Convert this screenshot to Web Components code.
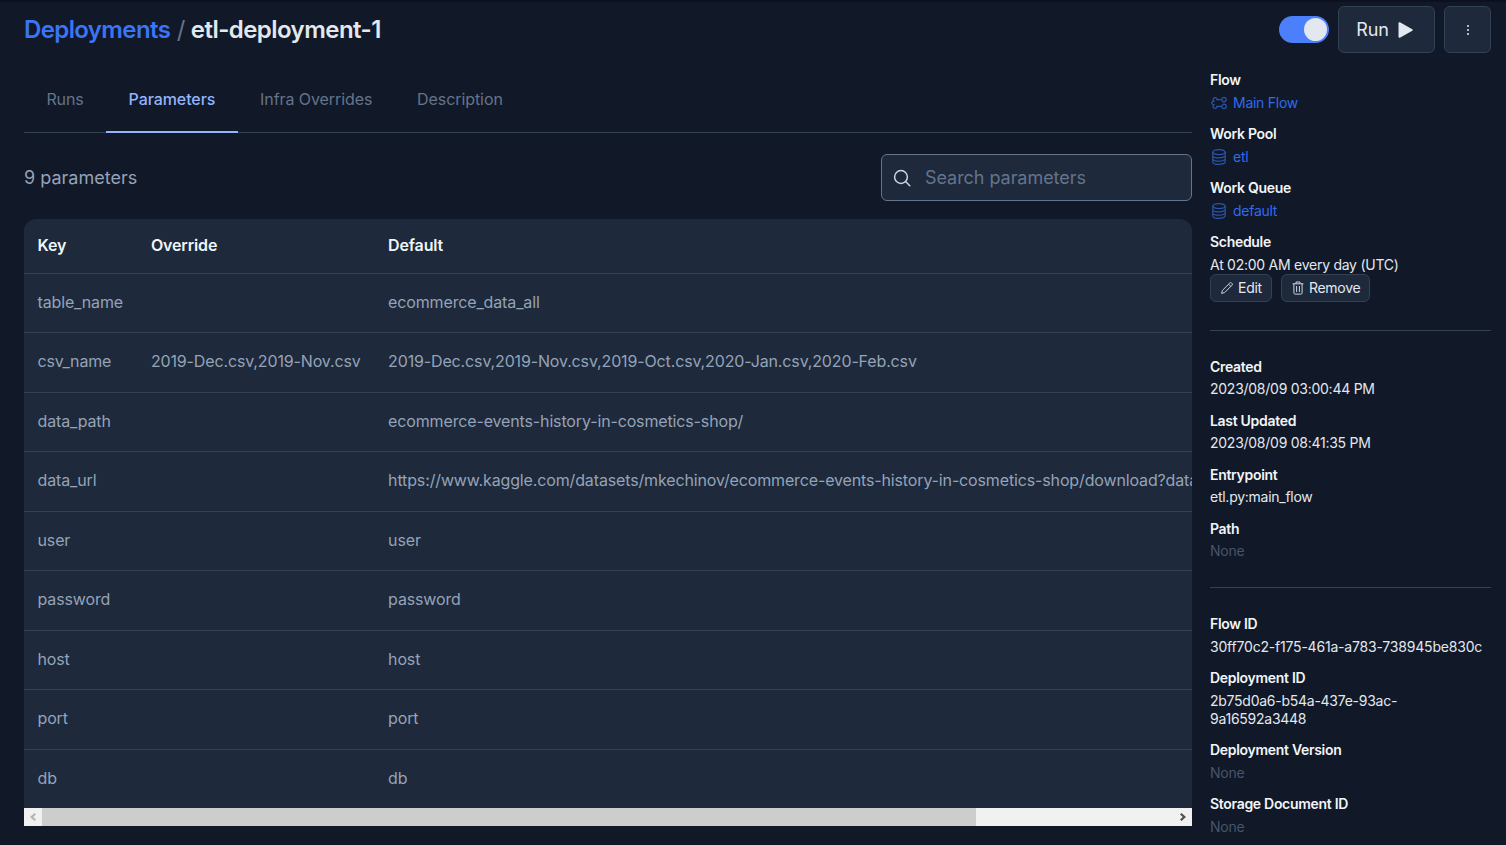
<!DOCTYPE html>
<html lang="en">
<head>
<meta charset="utf-8">
<title>etl-deployment-1</title>
<style>
html, body { margin: 0; height: 100%; overflow: hidden; background: #111827; }
body { font-family: Inter, "Noto Sans", sans-serif; color: #e2e8f0; }
</style>
</head>
<body>
<deployment-page></deployment-page>
<script>
const ICONS = {
    flow: '<svg width="16" height="12" viewBox="0 0 16 12" fill="none" stroke="currentColor" stroke-width="1.2"><circle cx="13" cy="2.6" r="2.2"/><circle cx="13" cy="9.4" r="2.2"/><path d="M10.8 2.6H5.2M10.8 9.4H5.2M6.2 2.6C6.2 1.4 5.2.6 4.2.6 2.9.6 2.1 1.6 2.1 2.7c0 .7.3 1.2.7 1.5C1.5 4.4.7 5.1.7 6s.8 1.6 2.1 1.8c-.4.3-.7.8-.7 1.5 0 1.1.8 2.1 2.1 2.1 1 0 2-.8 2-2"/></svg>',
    db: '<svg width="14" height="16" viewBox="0 0 14 16" fill="none" stroke="currentColor" stroke-width="1.2"><ellipse cx="7" cy="3.1" rx="6.2" ry="2.5"/><path d="M.8 3.1v9.8c0 1.4 2.8 2.5 6.2 2.5s6.2-1.1 6.2-2.5V3.1M.8 6.4c0 1.4 2.8 2.5 6.2 2.5s6.2-1.1 6.2-2.5M.8 9.7c0 1.4 2.8 2.5 6.2 2.5s6.2-1.1 6.2-2.5"/></svg>',
    pencil: '<svg width="12" height="12" viewBox="0 0 12 12" fill="none" stroke="currentColor" stroke-width="1" stroke-linejoin="round"><path d="M.6 11.4l.8-3L8.8 1a1.2 1.2 0 0 1 1.7 0l.5.5a1.2 1.2 0 0 1 0 1.7L3.6 10.6z"/><path d="M7.6 2.2l2.2 2.2"/></svg>',
    trash: '<svg width="12" height="14" viewBox="0 0 12 14" fill="none" stroke="currentColor" stroke-width="1"><path d="M.6 2.8h10.8M4 2.8V1h4v1.8M1.9 2.8v9c0 .8.5 1.3 1.2 1.3h5.8c.7 0 1.2-.5 1.2-1.3v-9M4.6 5v6M7.4 5v6"/></svg>',
    search: '<svg width="18" height="18" viewBox="0 0 18 18" fill="none" stroke="currentColor" stroke-width="1.5" stroke-linecap="round"><circle cx="8" cy="8" r="6.4"/><path d="M12.8 12.8l4 4"/></svg>',
    play: '<svg width="15" height="16" viewBox="0 0 15 16"><path fill="currentColor" d="M0.5 1.2c0-.8.8-1.2 1.4-.9l12.4 6.9c.7.4.7 1.3 0 1.6L1.9 15.7c-.6.3-1.4-.1-1.4-.9z"/></svg>',
    dots: '<svg width="4" height="12" viewBox="0 0 4 12"><g fill="currentColor"><circle cx="2" cy="2" r="1"/><circle cx="2" cy="6" r="1"/><circle cx="2" cy="10" r="1"/></g></svg>'
};

class PageHeader extends HTMLElement {
    constructor() {
        super();
        this.attachShadow({ mode: 'open' });
        this.shadowRoot.innerHTML = `
            <style>
                :host { display: flex; align-items: center; justify-content: space-between; height: 47px; padding: 4px 15px 0 24px; }
                .crumbs { font-size: 24px; line-height: 32px; font-weight: 600; letter-spacing: -0.55px; color: #e2e8f0; white-space: nowrap; }
                .crumbs a { color: #3b74f6; text-decoration: none; letter-spacing: -0.62px; }
                .crumbs span { color: #64748b; font-weight: 400; margin: 0 0.5px 0 1px; }
                .actions { display: flex; align-items: center; gap: 9px; }
                .toggle { width: 50px; height: 27px; border-radius: 14px; background: #4b7ffb; display: flex; align-items: center; justify-content: flex-end; padding-right: 2px; box-sizing: border-box; }
                .toggle i { width: 23px; height: 23px; border-radius: 50%; background: #e2e8f0; }
                .btn { height: 47px; box-sizing: border-box; border: 1px solid #334155; border-radius: 6px; background: #1e293b; color: #e2e8f0; display: flex; align-items: center; justify-content: center; }
                .run { width: 97px; gap: 9px; font-size: 18px; letter-spacing: -0.2px; padding-right: 4px; }
                .more { width: 47px; }
            </style>
            <div class="crumbs"><a href="#">Deployments</a> <span>/</span> etl-deployment-1</div>
            <div class="actions">
                <div class="toggle"><i></i></div>
                <div class="btn run">Run ${ICONS.play}</div>
                <div class="btn more">${ICONS.dots}</div>
            </div>
        `;
    }
}

class TabBar extends HTMLElement {
    constructor() {
        super();
        this.attachShadow({ mode: 'open' });
        this.shadowRoot.innerHTML = `
            <style>
                :host { display: flex; height: 66px; box-sizing: border-box; border-bottom: 1px solid #334155; margin-top: 14px; }
                .tab { padding: 0 22.4px; display: flex; align-items: center; font-size: 16px; letter-spacing: -0.08px; color: #64748b; margin-bottom: -1px; border-bottom: 2px solid transparent; box-sizing: border-box; font-weight: 400; }
                .tab.active { color: #93b4fb; font-weight: 500; border-bottom-color: #93b4fb; }
            </style>
            <div class="tab">Runs</div>
            <div class="tab active">Parameters</div>
            <div class="tab">Infra Overrides</div>
            <div class="tab">Description</div>
        `;
    }
}

class SearchBox extends HTMLElement {
    constructor() {
        super();
        this.attachShadow({ mode: 'open' });
        this.shadowRoot.innerHTML = `
            <style>
                :host { display: flex; align-items: center; width: 311px; height: 47px; box-sizing: border-box; border: 1px solid #64748b; border-radius: 6px; background: #1e293b; padding-left: 11px; gap: 14px; color: #cbd5e1; }
                span { font-size: 18px; color: #64748b; letter-spacing: -0.05px; }
                svg { flex: none; }
            </style>
            ${ICONS.search}
            <span>Search parameters</span>
        `;
    }
}

class ParamRow extends HTMLElement {
    constructor() {
        super();
        this.attachShadow({ mode: 'open' });
        this.shadowRoot.innerHTML = `
            <style>
                :host { display: grid; grid-template-columns: 113.4px 237.2px 1fr; align-items: center; height: 59.5px; box-sizing: border-box; padding: 0 0 2px 13.5px; border-top: 1px solid #334155; font-size: 16px; letter-spacing: -0.14px; color: #94a3b8; white-space: nowrap; overflow: hidden; }
                :host([head]) { height: 53.5px; border-top: 0; color: #f1f5f9; font-weight: 600; padding-bottom: 2px; }
            </style>
            <div><slot name="key"></slot></div>
            <div><slot name="override"></slot></div>
            <div><slot name="default"></slot></div>
        `;
    }
}

class ParamTable extends HTMLElement {
    constructor() {
        super();
        this.attachShadow({ mode: 'open' });
        this.shadowRoot.innerHTML = `
            <style>
                :host { display: block; background: #1e293b; border-radius: 12px 12px 0 0; overflow: hidden; }
                .bar { display: flex; height: 18px; background: #f1f1f1; }
                .end { width: 18px; display: flex; align-items: center; justify-content: center; color: #b4b4b4; }
                .thumb { width: 934px; background: #cdcdcd; }
                .rest { flex: 1; }
                .right { color: #505050; }
            </style>
            <slot></slot>
            <div class="bar">
                <div class="end"><svg width="6" height="8" viewBox="0 0 6 8"><path fill="currentColor" d="M4.5 0L6 1.4 3.2 4 6 6.6 4.5 8 0 4z"/></svg></div>
                <div class="thumb"></div>
                <div class="rest"></div>
                <div class="end right"><svg width="6" height="8" viewBox="0 0 6 8"><path fill="currentColor" d="M1.5 0L0 1.4 2.8 4 0 6.6 1.5 8 6 4z"/></svg></div>
            </div>
        `;
    }
}

class MetaItem extends HTMLElement {
    constructor() {
        super();
        this.attachShadow({ mode: 'open' });
        this.shadowRoot.innerHTML = `
            <style>
                :host { display: block; font-size: 14px; line-height: 18px; letter-spacing: -0.26px; color: #e2e8f0; }
                .label { font-weight: 600; line-height: 20px; color: #f1f5f9; margin-bottom: 3.5px; letter-spacing: -0.3px; }
                :host([none]) .value { color: #475569; }
                :host([link]) .value { color: #2f6bf0; display: flex; align-items: center; gap: 5px; }
                :host([link]) ::slotted(svg) { color: #2a55aa; flex: none; }
                :host([link]) ::slotted(svg.db) { margin-left: 2px; margin-right: 2px; }
                :host([link]) ::slotted(svg.flow) { margin-left: 1px; margin-right: 1px; }
            </style>
            <div class="label"><slot name="label"></slot></div>
            <div class="value"><slot></slot></div>
        `;
    }
}

class MetaButton extends HTMLElement {
    constructor() {
        super();
        this.attachShadow({ mode: 'open' });
        this.shadowRoot.innerHTML = `
            <style>
                :host { display: inline-flex; align-items: center; gap: 5px; height: 28px; box-sizing: border-box; padding: 0 9px 0 10px; border: 1px solid #334155; border-radius: 6px; background: #1e293b; font-size: 14px; letter-spacing: -0.26px; color: #e2e8f0; }
                :host ::slotted(svg) { color: #cbd5e1; }
            </style>
            <slot></slot>
        `;
    }
}

class MetaPanel extends HTMLElement {
    constructor() {
        super();
        this.attachShadow({ mode: 'open' });
        this.shadowRoot.innerHTML = `
            <style>
                :host { display: flex; flex-direction: column; gap: 12.5px; padding-top: 17.2px; }
                ::slotted(hr) { border: 0; border-top: 1px solid #334155; width: 100%; margin: 15.9px 0 13.1px; }
                ::slotted(hr.second) { margin: 14.5px 0 13.5px; }
            </style>
            <slot></slot>
        `;
    }
}

class DeploymentPage extends HTMLElement {
    constructor() {
        super();
        this.attachShadow({ mode: 'open' });
        const none = l => `<meta-item none><span slot="label">${l}</span>None</meta-item>`;
        const row = (k, o, d) => `<param-row><span slot="key">${k}</span><span slot="override">${o}</span><span slot="default">${d}</span></param-row>`;
        const icon = (name) => ICONS[name].replace('<svg', `<svg class="${name}"`);
        this.shadowRoot.innerHTML = `
            <style>
                :host { display: block; height: 845px; box-sizing: border-box; border-top: 2px solid #0b111e; background: #111827; overflow: hidden; }
                .body { display: grid; grid-template-columns: 1168px 281px; column-gap: 18px; padding-left: 24px; }
                .controls { display: flex; align-items: center; justify-content: space-between; padding: 21px 0 18px; }
                .count { font-size: 18px; color: #94a3b8; }
                .btns { display: flex; gap: 9px; }
                .hash { letter-spacing: -0.2px; }
            </style>
            <page-header></page-header>
            <div class="body">
                <main>
                    <tab-bar></tab-bar>
                    <div class="controls">
                        <div class="count">9 parameters</div>
                        <search-box></search-box>
                    </div>
                    <param-table>
                        <param-row head><span slot="key">Key</span><span slot="override">Override</span><span slot="default">Default</span></param-row>
                        ${row('table_name', '', 'ecommerce_data_all')}
                        ${row('csv_name', '2019-Dec.csv,2019-Nov.csv', '2019-Dec.csv,2019-Nov.csv,2019-Oct.csv,2020-Jan.csv,2020-Feb.csv')}
                        ${row('data_path', '', 'ecommerce-events-history-in-cosmetics-shop/')}
                        ${row('data_url', '', 'https://www.kaggle.com/datasets/mkechinov/ecommerce-events-history-in-cosmetics-shop/download?datasetVersionNumber=8')}
                        ${row('user', '', 'user')}
                        ${row('password', '', 'password')}
                        ${row('host', '', 'host')}
                        ${row('port', '', 'port')}
                        ${row('db', '', 'db')}
                    </param-table>
                </main>
                <meta-panel>
                    <meta-item link><span slot="label">Flow</span>${icon('flow')}Main Flow</meta-item>
                    <meta-item link><span slot="label">Work Pool</span>${icon('db')}etl</meta-item>
                    <meta-item link><span slot="label">Work Queue</span>${icon('db')}default</meta-item>
                    <meta-item><span slot="label">Schedule</span>At 02:00 AM every day (UTC)
                        <div class="btns">
                            <meta-button>${ICONS.pencil}Edit</meta-button>
                            <meta-button>${ICONS.trash}Remove</meta-button>
                        </div>
                    </meta-item>
                    <hr>
                    <meta-item><span slot="label">Created</span>2023/08/09 03:00:44 PM</meta-item>
                    <meta-item><span slot="label">Last Updated</span>2023/08/09 08:41:35 PM</meta-item>
                    <meta-item><span slot="label">Entrypoint</span>etl.py:main_flow</meta-item>
                    ${none('Path')}
                    <hr class="second">
                    <meta-item><span slot="label">Flow ID</span><span class="hash">30ff70c2-f175-461a-a783-738945be830c</span></meta-item>
                    <meta-item><span slot="label">Deployment ID</span>2b75d0a6-b54a-437e-93ac-<br>9a16592a3448</meta-item>
                    ${none('Deployment Version')}
                    ${none('Storage Document ID')}
                </meta-panel>
            </div>
        `;
    }
}

customElements.define('page-header', PageHeader);
customElements.define('tab-bar', TabBar);
customElements.define('search-box', SearchBox);
customElements.define('param-row', ParamRow);
customElements.define('param-table', ParamTable);
customElements.define('meta-item', MetaItem);
customElements.define('meta-button', MetaButton);
customElements.define('meta-panel', MetaPanel);
customElements.define('deployment-page', DeploymentPage);
</script>
</body>
</html>
